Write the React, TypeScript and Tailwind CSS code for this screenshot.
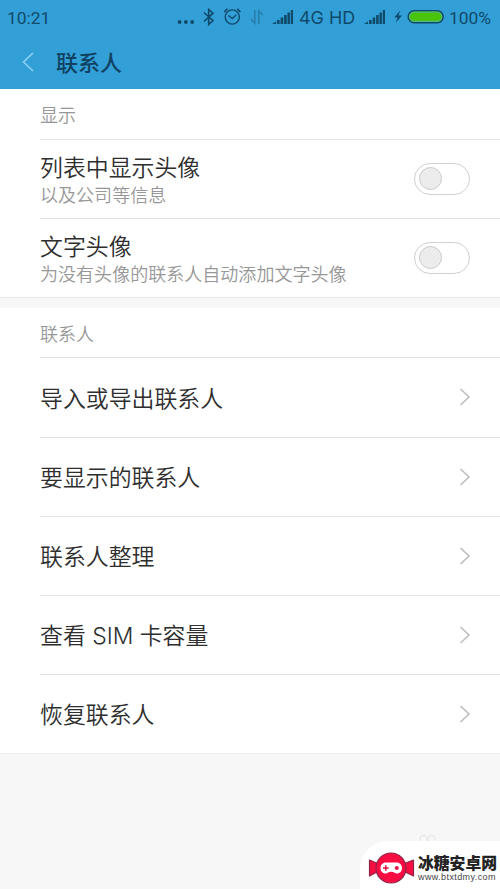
import React from "react";

const cjk = "font-['Inter','Noto_Sans_CJK_SC',sans-serif]";

function Signal() {
  return (
    <svg width="22" height="16" viewBox="0 0 22 16" fill="#0f4a6b">
      <path d="M0 16 L4 13.5 V16Z" />
      <rect x="5" y="12" width="2.6" height="4" />
      <rect x="8.6" y="9.5" width="2.6" height="6.5" />
      <rect x="12.1" y="7" width="2.6" height="9" />
      <rect x="15.5" y="4.5" width="2.4" height="11.5" />
      <rect x="18.8" y="2" width="2.2" height="14" />
    </svg>
  );
}

function StatusBar() {
  return (
    <div className="relative h-9 w-full font-['Roboto',sans-serif] text-[17.4px] leading-9 text-[#0f4a6b]">
      <span className="absolute left-[7px] top-0">10:21</span>
      <svg className="absolute left-[170px] top-0" width="100" height="36" fill="none" stroke="#0f4a6b" strokeWidth="1.4">
        <g fill="#0f4a6b" stroke="none">
          <circle cx="9.6" cy="22" r="1.9" />
          <circle cx="15.9" cy="22" r="1.9" />
          <circle cx="22.2" cy="22" r="1.9" />
        </g>
        <path d="M34 12.5 L43 20.5 L38.7 24.5 V9.5 L43 13.2 L34 21.5" strokeWidth="1.6" />
        <circle cx="62.3" cy="17" r="7.1" />
        <path d="M58.5 15.5 L62.3 18.5 L66.3 14.8" />
        <path d="M54.2 12 L57.4 8.8 M67.3 8.8 L70.4 12" strokeWidth="1.7" />
        <g stroke="#2580ad" strokeWidth="1.7">
          <path d="M84.8 10 V23 L80.8 18.8" />
          <path d="M88.8 24 V11 L92.8 15.2" />
        </g>
      </svg>
      <div className="absolute left-[272px] top-2 flex">
        <Signal />
      </div>
      <span className="absolute left-[299px] top-0 whitespace-nowrap font-['Inter',sans-serif] text-[17.9px]">4G HD</span>
      <div className="absolute left-[364px] top-2 flex">
        <Signal />
      </div>
      <svg className="absolute left-[392px] top-0" width="56" height="36">
        <path d="M8.2 10.5 L2.3 17.6 H5.6 L3.8 22.8 L10 15.6 H6.5Z" fill="#0f4a6b" />
        <rect x="16.2" y="10.7" width="35" height="12" rx="6" fill="#49c40b" stroke="#0f4a6b" strokeWidth="1.6" />
        <rect x="17.6" y="12.1" width="32.2" height="9.2" rx="4.6" fill="none" stroke="#55b5a0" strokeWidth="1" />
      </svg>
      <span className="absolute left-[449px] top-0">100%</span>
    </div>
  );
}

function SectionTitle({ children, className }: { children: React.ReactNode; className: string }) {
  return (
    <div
      className={`ml-10 flex items-center border-b border-[#e2e2e2] pt-1 text-[18px] font-[350] leading-6 text-[#979797] ${className}`}
    >
      {children}
    </div>
  );
}

function ToggleRow({ title, note, last }: { title: string; note: string; last?: boolean }) {
  return (
    <div
      className={`ml-10 flex items-center justify-between pr-[30px] ${last ? "h-[78px]" : "h-[79px] border-b border-[#e2e2e2]"}`}
    >
      <div className="pt-[5px] font-[350]">
        <div className="text-[22.9px] leading-[28px] text-[#2e2e2e]">{title}</div>
        <div className="text-[18.05px] leading-[28px] text-[#979797]">{note}</div>
      </div>
      <div className="flex h-8 w-14 items-center rounded-full border border-[#d0d0d0] bg-white pl-1">
        <div className="-mt-px size-[23px] rounded-full border border-[#cbcbcb] bg-[#ececec]" />
      </div>
    </div>
  );
}

function LinkRow({ title, first, last }: { title: string; first?: boolean; last?: boolean }) {
  return (
    <div
      className={`ml-10 flex items-center justify-between pr-[29px] text-[22.9px] font-[350] leading-7 text-[#2e2e2e] ${first ? "h-20" : last ? "h-[78px]" : "h-[79px]"} ${last ? "" : "border-b border-[#e2e2e2]"}`}
    >
      <span className="pt-0.5">{title}</span>
      <svg className="mb-px" width="12" height="18" viewBox="0 0 12 18" fill="none" stroke="#bdbdbd" strokeWidth="1.6">
        <path d="M1.5 1 L10 9 L1.5 17" />
      </svg>
    </div>
  );
}

function Watermark() {
  return (
    <>
      <svg className="absolute left-[416px] top-[832px]" width="24" height="12" fill="none" stroke="#e9e9e9" strokeWidth="1.5">
        <circle cx="7.5" cy="7" r="3.5" />
        <circle cx="15.5" cy="7" r="3.5" />
      </svg>
      <div className="absolute bottom-0 right-0 flex h-12 w-[140px] rounded-tl-[28px] bg-white">
        <svg className="absolute left-0 top-0" width="58" height="48">
          <g fill="#f80d42" stroke="#8e2548" strokeWidth="1.2" strokeLinejoin="round">
            <path d="M9.5 19 L19 23 V30 L9.5 35 Z" />
            <path d="M53.5 19 L43 23 V30 L53.5 35 Z" />
            <circle cx="31" cy="27" r="15" />
          </g>
          <path
            d="M26 21.5 H36.5 C40 21.5 42 24 42 27 C42 30 40 32.5 37 32.5 C34.5 32.5 34 30.8 31.2 30.8 C28.4 30.8 28 32.5 25.5 32.5 C22.5 32.5 20.5 30 20.5 27 C20.5 24 22.5 21.5 26 21.5Z"
            fill="#fff"
          />
          <path d="M23 27 H28.6 M25.8 24.2 V29.8" stroke="#d91445" strokeWidth="1.5" />
          <circle cx="36.8" cy="27" r="2" fill="#e91245" />
        </svg>
        <div className="ml-[58px] mt-[14px] whitespace-nowrap">
          <div className="text-[15.8px] font-black leading-[17px] text-[#222]">冰糖安卓网</div>
          <div className="font-['Liberation_Sans',sans-serif] text-[9px] leading-[10px] tracking-[0.4px] text-[#444]">
            www.btxtdmy.com
          </div>
        </div>
      </div>
    </>
  );
}

export default function App() {
  return (
    <div lang="zh-CN" className={`relative h-[889px] w-[500px] overflow-hidden bg-[#f7f7f7] ${cjk}`}>
      <header className="h-[89px] bg-[#339fd7]">
        <StatusBar />
        <div className="flex h-[53px] items-center pl-[22px]">
          <svg className="mb-0.5" width="13" height="20" viewBox="0 0 13 20" fill="none" stroke="#8bd2f5" strokeWidth="1.6">
            <path d="M11 1 L1.5 10 L11 19" />
          </svg>
          <h1 className="ml-[21px] text-[22px] font-medium leading-7 text-[#0f4261]">联系人</h1>
        </div>
      </header>
      <section className="border-b border-[#e9e9e9] bg-white">
        <SectionTitle className="h-[51px]">显示</SectionTitle>
        <ToggleRow title="列表中显示头像" note="以及公司等信息" />
        <ToggleRow title="文字头像" note="为没有头像的联系人自动添加文字头像" last />
      </section>
      <section className="mt-[10px] border-b border-[#eeeeee] bg-white">
        <SectionTitle className="h-[50px]">联系人</SectionTitle>
        <LinkRow title="导入或导出联系人" first />
        <LinkRow title="要显示的联系人" />
        <LinkRow title="联系人整理" />
        <LinkRow title="查看 SIM 卡容量" />
        <LinkRow title="恢复联系人" last />
      </section>
      <Watermark />
    </div>
  );
}
